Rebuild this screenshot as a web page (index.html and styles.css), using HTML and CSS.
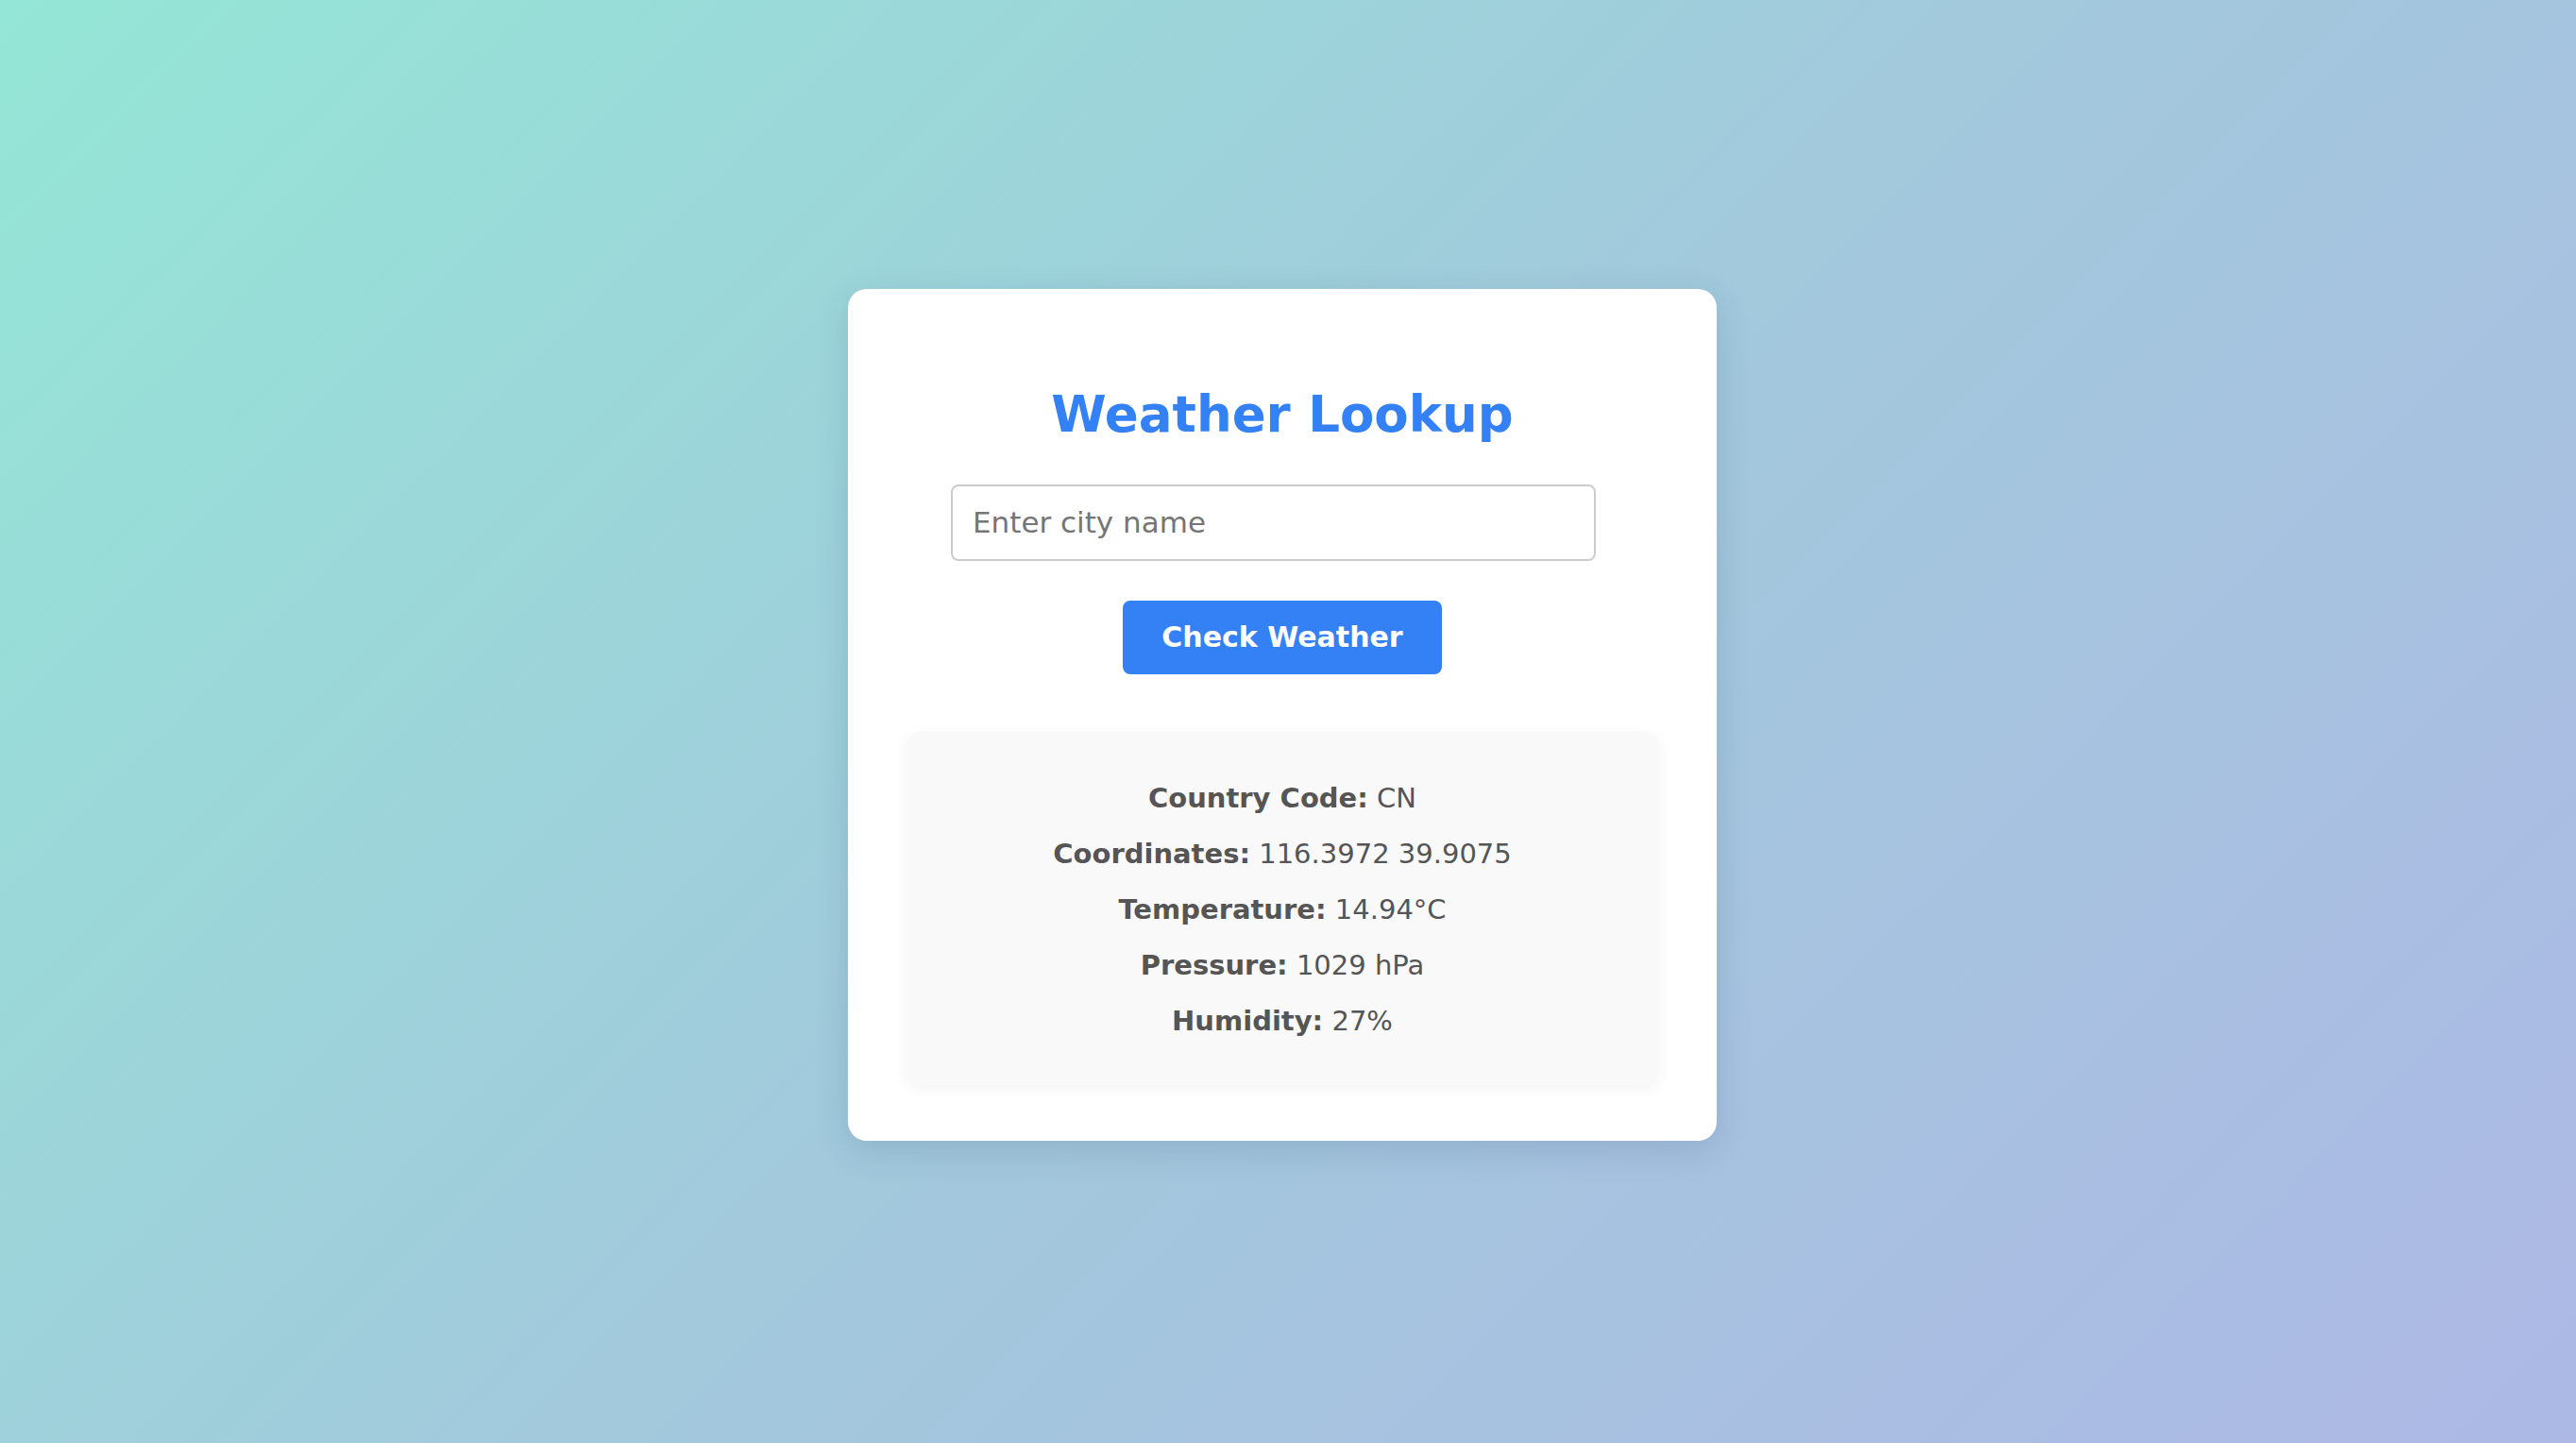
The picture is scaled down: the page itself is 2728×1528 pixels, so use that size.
FILE: index.html
```html
<!DOCTYPE html>
<html lang="en">
<head>
<meta charset="utf-8">
<title>Weather Lookup</title>
<link rel="stylesheet" href="styles.css">
</head>
<body>
  <main class="page">
    <section class="card">
      <h1 class="title">Weather Lookup</h1>
      <input class="city-input" type="text" placeholder="Enter city name">
      <button class="check-btn" type="button">Check Weather</button>
      <div class="results">
        <p class="row"><strong>Country Code:</strong> CN</p>
        <p class="row"><strong>Coordinates:</strong> 116.3972 39.9075</p>
        <p class="row"><strong>Temperature:</strong> 14.94°C</p>
        <p class="row"><strong>Pressure:</strong> 1029 hPa</p>
        <p class="row"><strong>Humidity:</strong> 27%</p>
      </div>
    </section>
  </main>
</body>
</html>
```

FILE: styles.css
```css
* {
  box-sizing: border-box;
}

html, body {
  margin: 0;
  padding: 0;
  height: 100%;
}

body {
  font-family: "DejaVu Sans", "Liberation Sans", sans-serif;
  background: linear-gradient(135deg, #94e6d6 0%, #a2c9dc 50%, #adb8e5 100%);
  color: #555555;
}

.page {
  min-height: 100vh;
  display: flex;
  align-items: center;
  justify-content: center;
  padding: 0 12px 14px 0;
}

.card {
  width: 920px;
  background: #ffffff;
  border-radius: 20px;
  padding: 60px 61px 59px;
  box-shadow: 0 10px 36px rgba(40, 70, 100, 0.16);
  display: flex;
  flex-direction: column;
  align-items: center;
}

.title {
  margin: 41px 0 0;
  font-size: 53px;
  line-height: 63.6px;
  font-weight: bold;
  color: #3481f6;
  text-align: center;
}

.city-input {
  align-self: flex-start;
  margin: 41.6px 0 0 48px;
  width: 683px;
  height: 81px;
  padding: 0 21px;
  border: 2px solid #cccccc;
  border-radius: 8px;
  font-family: "DejaVu Sans", "Liberation Sans", sans-serif;
  font-size: 31px;
  color: #333333;
  background: #ffffff;
  outline: none;
}

.city-input::placeholder {
  color: #757575;
}

.check-btn {
  margin-top: 42px;
  padding: 21px 41px;
  border: none;
  border-radius: 8px;
  background: #3481f6;
  color: #ffffff;
  font-family: "DejaVu Sans", "Liberation Sans", sans-serif;
  font-size: 30px;
  line-height: 36px;
  font-weight: bold;
  cursor: pointer;
}

.results {
  align-self: stretch;
  margin-top: 61px;
  padding: 41px 20px 38px;
  background: #f9f9f9;
  border-radius: 16px;
  box-shadow: 0 4px 16px rgba(0, 0, 0, 0.05);
  text-align: center;
}

.row {
  margin: 0;
  font-size: 29px;
  line-height: 59px;
  color: #555555;
}

.row strong {
  font-weight: bold;
}
```
